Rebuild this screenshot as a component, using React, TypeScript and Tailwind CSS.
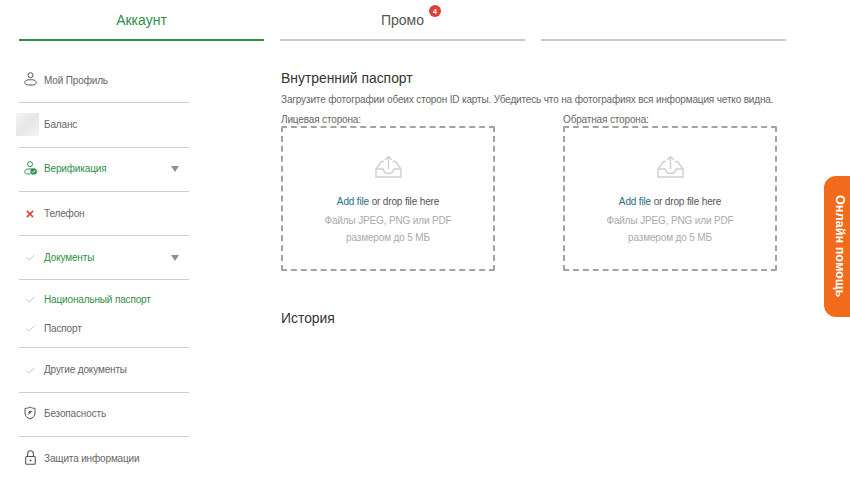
const green = "text-[#2f8f46]";

const UserIcon = () => (
  <svg width="13" height="14" viewBox="0 0 13 14" fill="none" stroke="#555" strokeWidth="1">
    <circle cx="6.5" cy="3.2" r="2.5" />
    <path d="M4.2 7.8H8.8C10.6 8 12.2 9 12.2 10.5C12.2 12 10.6 13 8.8 13H4.2C2.4 13 0.8 12 0.8 10.5C0.8 9 2.4 8 4.2 7.8Z" />
  </svg>
);

const VerifyIcon = () => (
  <svg width="13" height="14" viewBox="0 0 13 14" fill="none" stroke="#2f8f46" strokeWidth="1">
    <circle cx="6" cy="3.2" r="2.5" />
    <path d="M6.5 13H3.6C2 13 0.8 12.2 0.8 10.8C0.8 9.2 2.2 8 3.8 8H8" />
    <circle cx="9.6" cy="10.4" r="3.2" fill="#2f8f46" stroke="none" />
    <path d="M8 10.4L9.2 11.6L11.2 9.3" stroke="#fff" strokeWidth="1" />
  </svg>
);

const Check = () => (
  <svg width="9" height="7" viewBox="0 0 9 7" fill="none" stroke="#c4c4c4" strokeWidth="1">
    <path d="M0.7 3.4L3.3 6L8.4 0.7" />
  </svg>
);

const Cross = () => (
  <svg width="8" height="8" viewBox="0 0 9 9" fill="none" stroke="#d2453a" strokeWidth="1.7">
    <path d="M1 1L8 8M8 1L1 8" />
  </svg>
);

const Shield = () => (
  <svg width="12" height="14" viewBox="0 0 12 14" fill="none" stroke="#555" strokeWidth="1">
    <path d="M6 1C7.6 2 9.4 2.4 11 2.4V7C11 10 8.8 11.9 6 13C3.2 11.9 1 10 1 7V2.4C2.6 2.4 4.4 2 6 1Z" />
    <path d="M4 8.8L8 4.6" />
    <path d="M4.2 6.2L6.2 4.4L7.6 5.8L5.6 7.8Z" fill="#555" stroke="none" />
  </svg>
);

const Lock = () => (
  <svg width="11" height="15" viewBox="0 0 11 15" fill="none" stroke="#555" strokeWidth="1.1">
    <path d="M2.6 6.5V3.8C2.6 2.1 3.9 0.8 5.5 0.8C7.1 0.8 8.4 2.1 8.4 3.8V6.5" />
    <rect x="0.7" y="6.5" width="9.6" height="7.8" rx="1" />
    <circle cx="5.5" cy="10.4" r="1" fill="#555" stroke="none" />
  </svg>
);

const Caret = () => (
  <div className="ml-auto mr-[10px] h-0 w-0 border-x-[4px] border-t-[6px] border-x-transparent border-t-[#8f8f8f]" />
);

const UploadIcon = () => (
  <svg width="27" height="23" viewBox="0 0 27 23" fill="none" stroke="#cfcfcf" strokeWidth="1.4">
    <path d="M13.5 14V1.5M10 5L13.5 1.5L17 5" />
    <path d="M9 6.5H6.5L1 14V22H26V14L20.5 6.5H18" />
    <path d="M1 14H8C8.5 16.5 10.5 18.5 13.5 18.5C16.5 18.5 18.5 16.5 19 14H26" />
  </svg>
);

const Row = ({
  icon,
  label,
  color = "text-[#666]",
  caret,
  line = true,
  lift,
  h = "h-[44.3px]",
}: {
  icon: React.ReactNode;
  label: string;
  color?: string;
  caret?: boolean;
  line?: boolean;
  lift?: boolean;
  h?: string;
}) => (
  <div className={`flex items-center ${h} ${line ? "border-b border-[#cfcfcf]" : ""}`}>
    <div className={`flex w-[25px] shrink-0 justify-center pr-[3px] ${lift ? "pb-[3px]" : ""}`}>{icon}</div>
    <span className={`pb-[1px] text-[10px] tracking-[-0.15px] ${color}`}>{label}</span>
    {caret && <Caret />}
  </div>
);

const DropBox = ({ title }: { title: string }) => (
  <div className="w-[214px]">
    <div className="h-[13px] text-[10px] leading-[13px] tracking-[-0.15px] text-[#666]">{title}</div>
    <div className="flex h-[145px] flex-col items-center rounded-[2px] border-2 border-dashed border-[#a3a3a3] pt-[27px]">
      <UploadIcon />
      <div className="mt-[17px] text-[10px] leading-[14px] tracking-[-0.15px] text-[#555]">
        <span className="text-[#1f6f85]">Add file</span> or drop file here
      </div>
      <div className="mt-[4px] text-center text-[10px] leading-[16.5px] tracking-[-0.15px] text-[#aaa]">
        Файлы JPEG, PNG или PDF
        <br />
        размером до 5 МБ
      </div>
    </div>
  </div>
);

export default function App() {
  return (
    <div className="relative h-[478px] w-[850px] overflow-hidden bg-white font-['Liberation_Sans',sans-serif]">
      <div className="flex gap-4 pl-[19px] pt-[11px]">
        <div className="flex h-[30px] w-[245px] items-start justify-center border-b-[2px] border-[#2f8f46]">
          <span className={`text-[14px] leading-[18px] ${green}`}>Аккаунт</span>
        </div>
        <div className="flex h-[30px] w-[245px] items-start justify-center border-b-[2px] border-[#c9c9c9]">
          <span className="relative text-[14px] leading-[18px] text-[#555]">
            Промо
            <span className="absolute -right-[17px] -top-[6px] flex h-[12px] w-[12px] items-center justify-center rounded-full bg-[#d9423a] text-[7px] font-bold leading-none text-white">
              4
            </span>
          </span>
        </div>
        <div className="h-[30px] w-[245px] border-b-[2px] border-[#c9c9c9]" />
      </div>

      <div className="flex pl-[19px] pt-[18px]">
        <div className="w-[170px] shrink-0">
          <Row icon={<UserIcon />} label="Мой Профиль" lift />
          <div className="relative">
            <div className="absolute -left-[3px] top-[10px] h-[23px] w-[23px] bg-gradient-to-br from-[#f6f6f6] via-[#e6e6e6] to-[#f4f4f4]" />
            <Row icon={null} label="Баланс" />
          </div>
          <Row icon={<VerifyIcon />} label="Верификация" color={green} caret lift />
          <Row icon={<Cross />} label="Телефон" />
          <Row icon={<Check />} label="Документы" color={green} caret />
          <div className="border-b border-[#cfcfcf] pb-[4px] pt-[5px]">
            <Row icon={<Check />} label="Национальный паспорт" color={green} line={false} h="h-[29px]" />
            <Row icon={<Check />} label="Паспорт" line={false} h="h-[29px]" />
          </div>
          <Row icon={<Check />} label="Другие документы" />
          <Row icon={<Shield />} label="Безопасность" lift />
          <Row icon={<Lock />} label="Защита информации" line={false} lift />
        </div>

        <div className="ml-[92px] flex-1 pt-[10px]">
          <h2 className="text-[13.9px] leading-[18px] text-[#333]">Внутренний паспорт</h2>
          <p className="mt-[6px] text-[10px] leading-[14px] tracking-[-0.15px] text-[#666]">
            Загрузите фотографии обеих сторон ID карты. Убедитесь что на фотографиях вся информация четко видна.
          </p>
          <div className="mt-[6px] flex gap-[68px]">
            <DropBox title="Лицевая сторона:" />
            <DropBox title="Обратная сторона:" />
          </div>
          <h2 className="mt-[38px] text-[13.9px] leading-[18px] text-[#333]">История</h2>
        </div>
      </div>

      <div className="absolute right-0 top-[176px] flex h-[141px] w-[26px] items-center justify-center rounded-l-[12px] bg-[#f26a1b] pl-[5px]">
        <span className="whitespace-nowrap text-[12.7px] font-bold text-white [writing-mode:vertical-rl]">
          Онлайн помощь
        </span>
      </div>
    </div>
  );
}
